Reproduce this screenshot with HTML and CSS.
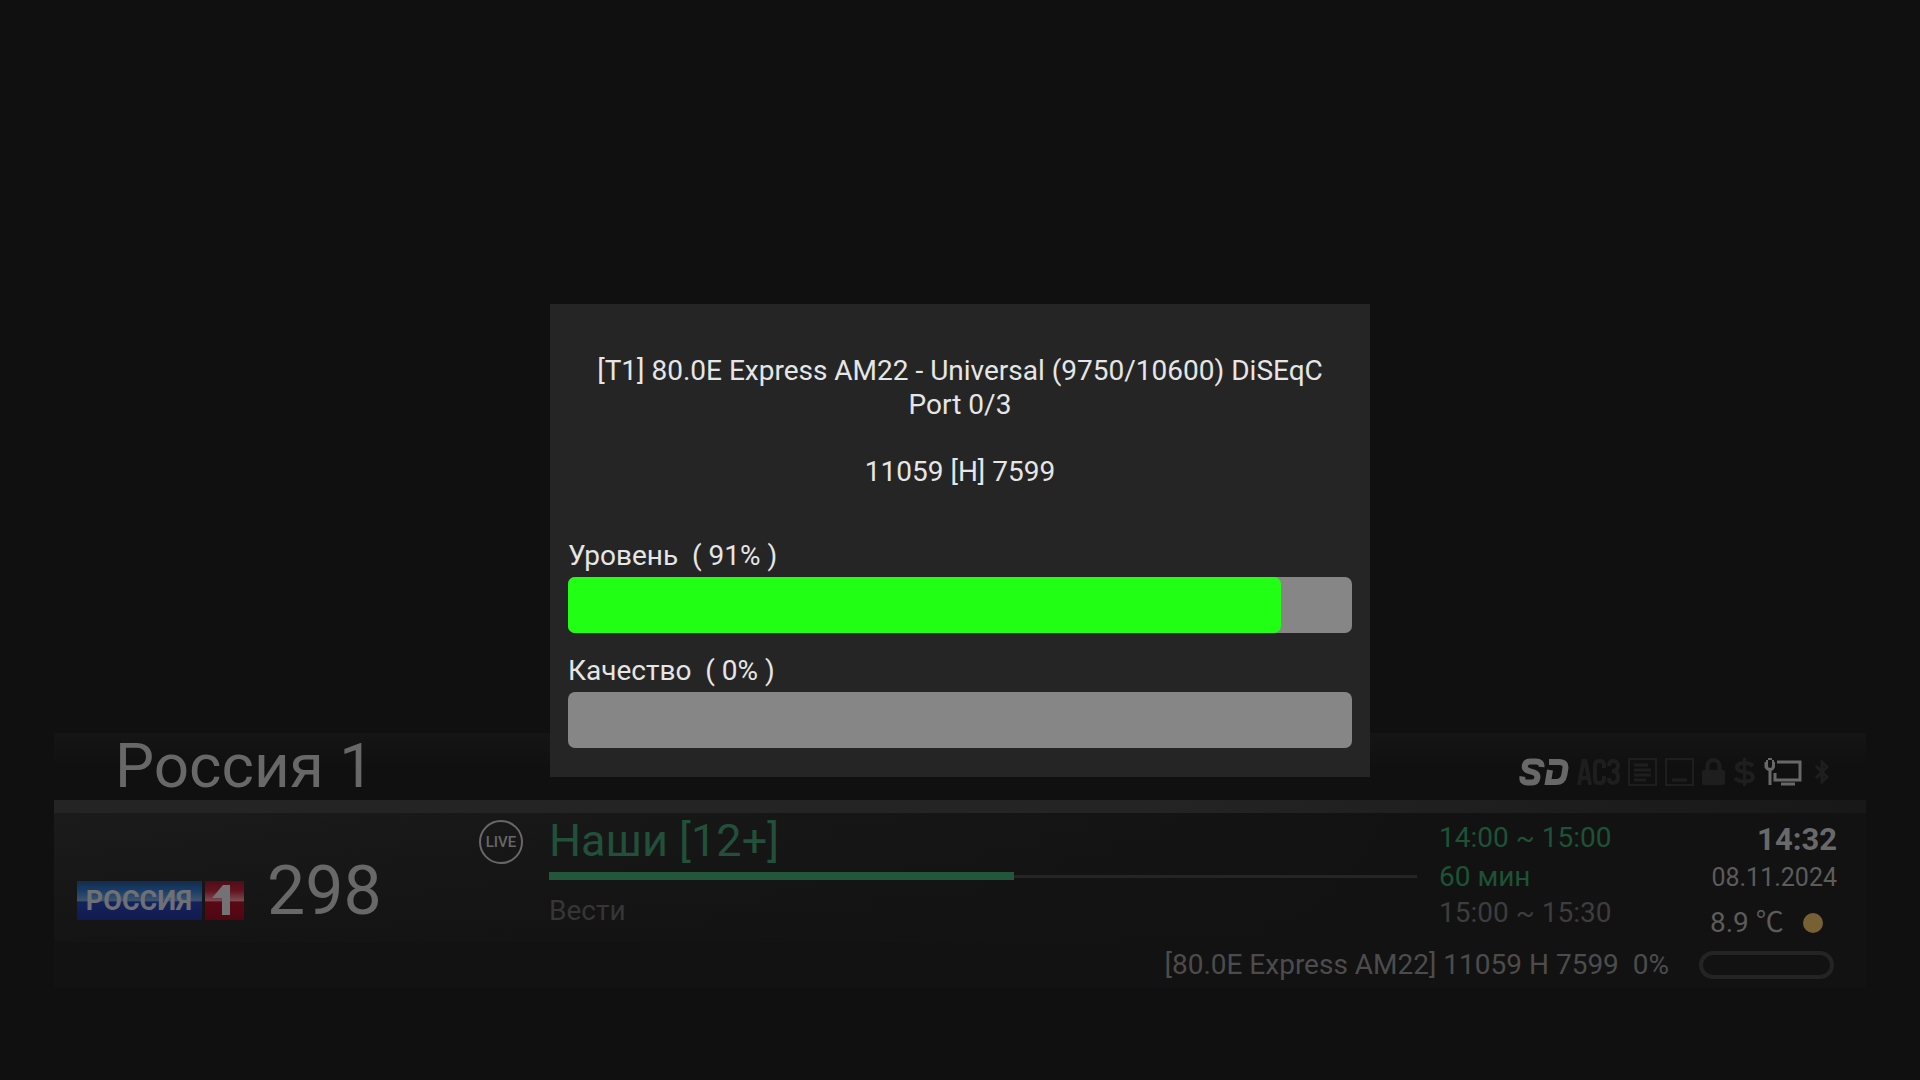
FILE: index.html
```html
<!DOCTYPE html>
<html lang="ru">
<head>
<meta charset="utf-8">
<title>Россия 1</title>
<link rel="stylesheet" href="styles.css">
</head>
<body>
<main class="screen">
  <section class="osd" aria-label="Инфопанель канала">
    <header class="osd-head">
      <h1 class="channel">Россия 1</h1>
      <div class="flags">
        <svg class="sd" width="50" height="28" viewBox="0 0 50 28" fill="none" stroke="currentColor" stroke-width="6"><path d="M22.500 9 Q23 3.500 17 3.500 H11 Q6.500 3.500 5.800 8 Q5.300 11.500 10 13 L15 14.500 Q19 16 18.300 20 Q17.500 24.500 13 24.500 H8 Q2.500 24.500 3.500 18.500"/><path d="M30 4 H40 Q47.500 4 46.300 11 L45.300 17 Q44 24 37 24 H29 L31 12"/></svg>
        <svg class="dim" width="43" height="26" viewBox="0 0 43 26" fill="none" stroke="currentColor" stroke-width="4"><path d="M2 26 L6.500 2 H8.500 L13 26 M4 19 H11"/><path d="M27 9 V6 Q27 2 23 2 H22 Q18 2 18 6 V20 Q18 24 22 24 H23 Q27 24 27 20 V17"/><path d="M32 7 Q32 2 36 2 Q41 2 41 7 Q41 12 35 12 Q41 12 41 18 Q41 24 36 24 Q32 24 32 19"/></svg>
        <svg class="dim" width="29" height="28" viewBox="0 0 29 28" fill="none" stroke="currentColor" stroke-width="2"><rect x="1" y="1" width="27" height="26"/><path stroke-width="3" d="M6 7 H20 M6 12 H23 M6 17 H23 M6 22 H18"/></svg>
        <svg class="dim" width="29" height="28" viewBox="0 0 29 28" fill="none" stroke="currentColor" stroke-width="2"><rect x="1" y="1" width="27" height="26"/><path stroke-width="3" d="M7 22 H22"/></svg>
        <svg class="dim" width="23" height="28" viewBox="0 0 23 28" fill="none" stroke="currentColor" stroke-width="4"><path d="M5.500 13 V8 A6 6 0 0 1 17.500 8 V13"/><rect y="12" width="23" height="15" rx="2" fill="currentColor" stroke="none"/></svg>
        <svg class="dim" width="23" height="28" viewBox="0 0 23 28" fill="none" stroke="currentColor" stroke-width="4"><path d="M20 8 Q17 5 11.500 5 Q4 5 4 9.500 Q4 13 11.500 14 Q20 15 20 19 Q20 23.500 11.500 23.500 Q5 23.500 2 20"/><path stroke-width="3" d="M11.500 0 V28"/></svg>
        <svg width="38" height="28" viewBox="0 0 38 28" fill="none" stroke="currentColor" stroke-width="2"><path d="M3 2 V8 Q3 11 6 11 Q9 11 9 8 V2 M1.500 4 V9 Q3 12 6 12 Q9 12 10 9 V4 M4 1 H8"/><path stroke-width="3" d="M6 12 V27"/><path stroke-width="3" d="M13 4 H36 V22 H11 V15 M17 26 H31"/></svg>
        <svg class="dim bluetooth" width="16" height="24" viewBox="0 0 16 24" fill="none" stroke="currentColor" stroke-width="3"><path d="M2 6 L13 17 L8 22 V2 L13 7 L2 18"/></svg>
      </div>
    </header>
    <div class="strip"></div>
    <div class="osd-body">
      <div class="ident">
        <svg class="logo" width="168" height="39" viewBox="0 0 168 39" role="img" aria-label="Россия 1">
          <defs>
            <linearGradient id="blue" x1="0" y1="0" x2="0" y2="1"><stop offset="0" stop-color="#122c4e"/><stop offset="0.250" stop-color="#193d66"/><stop offset="0.500" stop-color="#3c5370"/><stop offset="0.540" stop-color="#14235c"/><stop offset="1" stop-color="#121a50"/></linearGradient>
            <linearGradient id="red" x1="0" y1="0" x2="0" y2="1"><stop offset="0" stop-color="#500c18"/><stop offset="0.250" stop-color="#621420"/><stop offset="0.500" stop-color="#7a4a50"/><stop offset="0.540" stop-color="#5a0916"/><stop offset="1" stop-color="#500612"/></linearGradient>
          </defs>
          <rect width="125" height="39" fill="url(#blue)"/>
          <rect x="128" width="39" height="39" fill="url(#red)"/>
          <text class="logo-text" x="62" y="29" text-anchor="middle">РОССИЯ</text>
          <path fill="#737376" d="M146 4 H153 V34 H145 V17 H135 Z"/>
        </svg>
        <span class="number">298</span>
      </div>
      <div class="live">LIVE</div>
      <div class="programme">
        <h2 class="now">Наши [12+]</h2>
        <div class="track"><div class="elapsed" style="width:53.6%"></div></div>
        <p class="next">Вести</p>
      </div>
      <div class="times">
        <span class="green t1">14:00 ~ 15:00</span>
        <span class="green t2">60 мин</span>
        <span>15:00 ~ 15:30</span>
      </div>
      <div class="clock">
        <time class="hour">14:32</time>
        <time class="date">08.11.2024</time>
        <div class="weather"><span>8.9 ℃</span><span class="sun"></span></div>
      </div>
    </div>
    <footer class="tuning"><span>[80.0E Express AM22] 11059 H 7599&nbsp; 0%</span><span class="pill"></span></footer>
  </section>
  <section class="overlay">
    <div class="dialog" role="dialog" aria-labelledby="source">
      <p class="source" id="source">[T1] 80.0E Express AM22 - Universal (9750/10600) DiSEqC Port 0/3</p>
      <p class="source">11059 [H] 7599</p>
      <div class="meters">
        <div class="meter"><span id="level">Уровень&nbsp; ( 91% )</span>
          <div class="bar" role="progressbar" aria-labelledby="level" aria-valuenow="91"><div class="fill" style="width:91%"></div></div></div>
        <div class="meter"><span id="quality">Качество&nbsp; ( 0% )</span>
          <div class="bar" role="progressbar" aria-labelledby="quality" aria-valuenow="0"></div></div>
      </div>
    </div>
  </section>
</main>
</body>
</html>
```
FILE: styles.css
```css
* { box-sizing: border-box; }
body { margin: 0; background: #101010; color: #686868; font-family: Roboto, "Noto Sans CJK JP", sans-serif; font-size: 28px; line-height: 34px; }
h1, h2, p { margin: 0; font-weight: 400; }
.screen { min-height: 100vh; display: flex; flex-direction: column; justify-content: flex-end; padding: 0 54px 92px; }
.osd { background: #111; }
.osd-head { height: 67px; display: flex; justify-content: space-between; align-items: center; padding: 0 36px 2px 61px; background: linear-gradient(#151515, #101010 50%); }
.channel { font-size: 62px; line-height: 66px; }
.flags { display: flex; align-items: center; gap: 8px; padding-top: 12px; }
.flags svg { display: block; }
.dim { color: #1e1e1e; }
.flags .bluetooth { margin-left: 4px; }
.strip { height: 13px; background: linear-gradient(90deg, #242424 60%, #181818); }
.osd-body { display: grid; grid-template-columns: 425px 44px 1fr 271px 127px; padding-right: 29px; height: 129px; background: linear-gradient(100deg, transparent, #121212 75%), linear-gradient(#1b1b1b, #141414); }
.ident { display: flex; align-items: flex-end; gap: 22px; padding: 0 0 22px 23px; }
.logo-text { font: 700 27px Roboto, sans-serif; fill: #6e7076; }
.number { font-size: 68px; line-height: 58px; }
.live { width: 44px; height: 44px; margin-top: 7px; border: 2px solid currentColor; border-radius: 50%; font: 500 15px/40px Roboto, sans-serif; text-align: center; }
.programme { padding: 0 22px 0 26px; }
.now { font-size: 45px; line-height: 56px; color: #22503a; }
.track { margin-top: 3px; height: 8px; background: linear-gradient(#252525, #252525) center / 100% 3px no-repeat; }
.elapsed { height: 8px; background: #22573b; }
.next { margin-top: 14px; color: #363636; }
.times { display: flex; flex-direction: column; padding-top: 5px; color: #3d3d3d; }
.green { color: #1d5236; }
.t1 { line-height: 40px; }
.t2 { line-height: 38px; }
.clock { display: flex; flex-direction: column; gap: 4px; padding-top: 10px; color: #5c5c5c; }
.hour { font-size: 31px; font-weight: 700; text-align: right; color: #696969; }
.date { font-size: 25px; text-align: right; }
.weather { display: flex; align-items: center; justify-content: space-between; padding: 7px 14px 0 0; }
.sun { width: 20px; height: 20px; border-radius: 50%; background: #776033; }
.tuning { display: flex; justify-content: flex-end; align-items: center; gap: 30px; height: 46px; padding: 0 32px 0 0; color: #4c4c4c; background: #121212; }
.pill { width: 135px; height: 28px; border: 4px solid #242424; border-radius: 14px; }
.overlay { position: absolute; inset: 0; display: grid; place-items: center; }
.dialog { width: 820px; padding: 50px 18px 29px; background: #252525; color: #e6e6e6; }
.source { padding: 0 20px; text-align: center; }
.source + .source { padding-top: 33px; }
.meters { display: grid; gap: 21px; margin-top: 50px; }
.meter { display: grid; gap: 4px; }
.bar { height: 56px; border-radius: 7px; background: #868686; }
.fill { height: 56px; border-radius: 7px; background: #20ff14; }
```
